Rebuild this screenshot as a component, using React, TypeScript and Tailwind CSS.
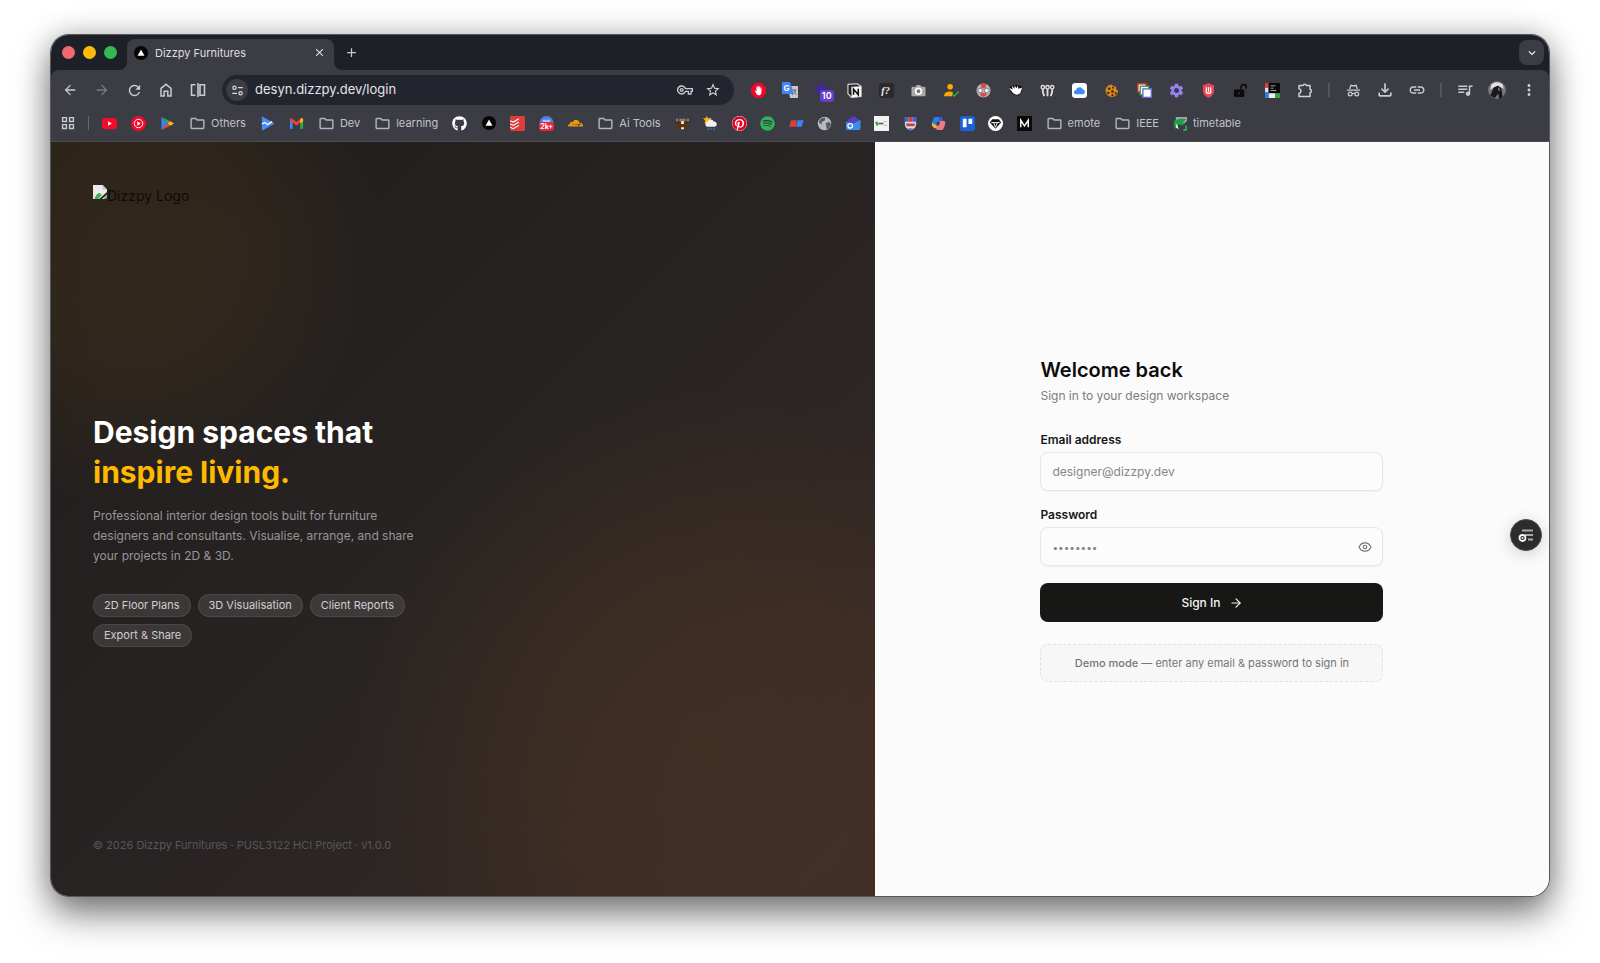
import type { ReactNode } from "react";
import {
  MdArrowBack,
  MdArrowForward,
  MdRefresh,
  MdStarOutline,
  MdOutlineVpnKey,
  MdOutlineFolder,
  MdOutlineExtension,
  MdQueueMusic,
  MdLink,
  MdMoreVert,
  MdExpandMore,
  MdClose,
  MdAdd,
  MdSettings,
  MdOutlineFileDownload,
} from "react-icons/md";
import { FaGithub, FaPinterest, FaSpotify, FaCloudflare } from "react-icons/fa6";
import { ArrowRight, Eye } from "lucide-react";

const svg = (children: ReactNode, cls = "size-[15px]", box = "0 0 16 16") => (
  <svg viewBox={box} className={cls} fill="none" aria-hidden="true">
    {children}
  </svg>
);

const HomeIcon = svg(
  <path d="M3 14V6.4L8 2.3l5 4.1V14H9.8V9.3H6.2V14Z" stroke="#c9cacd" strokeWidth="1.5" />,
  "size-4"
);
const SplitIcon = svg(
  <path d="M5.5 2.8H1.5v10.4h4M8 1v14M10 2.8h4.5v10.4H10Z" stroke="#c9cacd" strokeWidth="1.6" />,
  "size-4"
);
const TuneIcon = svg(
  <g stroke="#d7d8da" strokeWidth="1.5">
    <circle cx="4.2" cy="4.5" r="2" />
    <path d="M8.5 4.5h6M1.5 11.5h6" />
    <circle cx="11.8" cy="11.5" r="2" />
  </g>,
  "size-[13px]"
);
const AppsIcon = svg(
  <path
    d="M1.8 1.8h4.4v4.4H1.8ZM9.8 1.8h4.4v4.4H9.8ZM1.8 9.8h4.4v4.4H1.8ZM9.8 9.8h4.4v4.4H9.8Z"
    stroke="#c9cacd"
    strokeWidth="1.6"
  />,
  "size-[14px]"
);
const IncognitoIcon = svg(
  <g stroke="#c9cacd" strokeWidth="1.4">
    <path d="M4 6.5 5.2 2.5 8 3.2l2.8-.7L12 6.5" />
    <path d="M1 7.5h14M6.5 11.5q1.500-1 3 0" />
    <circle cx="4.5" cy="11.7" r="2" />
    <circle cx="11.5" cy="11.7" r="2" />
  </g>,
  "size-[15px]"
);

const Vercel = svg(
  <>
    <circle cx="8" cy="8" r="8" fill="#050505" />
    <path d="m8 4 4 7H4Z" fill="#fff" />
  </>,
  "size-[14px]"
);

type Item = { label: string; icon: ReactNode };

const extensions: Item[] = [
  {
    label: "AdBlock",
    icon: svg(
      <>
        <path d="M4.700 0h6.600L16 4.700v6.600L11.300 16H4.700L0 11.300V4.700Z" fill="#f2062b" />
        <path
          d="M4.300 8.500 5.200 8l.6 1V4.200q.5-.7 1 0V7l.3-3.800q.6-.7 1 0L8.400 7l.4-3.200q.6-.6 1 0V7.500l.4-2.500q.6-.5 1 0v5q-.4 3-3 3-2 0-2.700-1.800Z"
          fill="#fff"
        />
      </>
    ),
  },
  {
    label: "Google Translate",
    icon: svg(
      <>
        <path d="M6 4h10v12H8Z" fill="#c8c8c8" />
        <path d="M9.500 8h5M12 7v1q1 3 2.500 5M14 8q-1 3-4 5" stroke="#777" />
        <path d="M0 0h8l4 12H0Z" fill="#4285f4" />
        <text x="1.500" y="9" fontSize="8" fontWeight="700" fill="#fff" fontFamily="Inter, sans-serif">
          G
        </text>
      </>,
      "size-4"
    ),
  },
  {
    label: "Wallet notifications",
    icon: (
      <span className="relative block">
        {svg(<path d="M6 0 14 4v7l-7 3-7-5V4Z" fill="#3f2a8f" />)}
        <span className="absolute top-[7px] left-[5px] rounded-[3px] bg-[#6a3fc8] px-[2px] text-[9px] leading-3 font-semibold text-white">
          10
        </span>
      </span>
    ),
  },
  {
    label: "Notion",
    icon: svg(
      <>
        <path d="m1 1.500 10-.7L15 3.500V14.500L5 15.300 1 11.500Z" fill="#222" stroke="#ddd" strokeWidth="1.200" />
        <path d="M4.500 4 15 3.500V14.500L5 15.300Z" fill="#f5f5f5" />
        <path d="M7 12.500v-6l5 6v-6.500" stroke="#111" strokeWidth="1.700" />
      </>
    ),
  },
  {
    label: "WhatFont",
    icon: svg(
      <>
        <rect width="16" height="16" rx="3" fill="#2a2a2c" />
        <text x="2.500" y="12" fontSize="11" fontStyle="italic" fontWeight="700" fill="#eee" fontFamily="Liberation Serif, serif">
          f?
        </text>
      </>
    ),
  },
  {
    label: "Screenshot",
    icon: svg(
      <>
        <path d="M2 4h3l1-2h4l1 2h3q1.500 0 1.500 1.500V13q0 1-1.500 1H2q-1.500 0-1.500-1V5.500Q.5 4 2 4" fill="#aaa" />
        <circle cx="8" cy="8.700" r="3" fill="#777" stroke="#fff" strokeWidth="1.800" />
      </>
    ),
  },
  {
    label: "Account check",
    icon: svg(
      <>
        <circle cx="6.500" cy="4" r="3" fill="#f9ab00" />
        <path d="M0 14q0-5 6.500-5 3 0 3 2l-1 3Z" fill="#f9ab00" />
        <path d="m9 12 2 2 4.500-5" stroke="#34a853" strokeWidth="1.500" />
      </>
    ),
  },
  {
    label: "Reader",
    icon: svg(
      <>
        <circle cx="8" cy="8" r="7.500" fill="#b9b4b4" />
        <path d="M5 1.500q3-2 6 0l-1 4H6ZM4 12q4-3 8 0-4 6-8 0" fill="#e04848" />
        <g fill="#eee" stroke="#777" strokeWidth="1">
          <circle cx="4.500" cy="8" r="2.500" />
          <circle cx="11.500" cy="8" r="2.500" />
        </g>
      </>
    ),
  },
  {
    label: "Hand",
    icon: svg(
      <>
        <path d="M1 5q3-3 7-3l6 1q2 5-1 9-5 3-9-1Z" fill="#111" />
        <path d="m1 5 4 2-1-4 3 3V2.500l2 3L10.500 3 11 6l4-1-2 6q-3.500 3-7.500 0Z" fill="#fff" />
      </>
    ),
  },
  {
    label: "Tools",
    icon: svg(
      <g stroke="#dcdcdc" strokeWidth="1.500">
        <circle cx="3" cy="4.500" r="1.800" />
        <circle cx="8" cy="4.500" r="1.800" />
        <circle cx="13" cy="4.500" r="1.800" />
        <path d="M3 6.500v3L4.500 14M8 6.500V14M13 6.500v3L11.500 14" strokeWidth="2" />
      </g>
    ),
  },
  {
    label: "Cloud drive",
    icon: svg(
      <>
        <rect width="16" height="16" rx="3.500" fill="#fff" />
        <path d="M4.500 12a2.300 2.300 0 0 1-.3-4.600 4 4 0 0 1 7.500-.6A2.700 2.700 0 0 1 12 12Z" fill="#3b8df5" />
      </>
    ),
  },
  {
    label: "Cookie editor",
    icon: svg(
      <>
        <path d="M8 1.500a6.700 6.700 0 1 0 7 6.500l-2-1V4l-3-.5Z" fill="#d68a1c" />
        <g fill="#3b230c">
          <circle cx="5.500" cy="6" r="1.300" />
          <circle cx="4.500" cy="10.500" r="1.300" />
          <circle cx="9" cy="9" r="1.400" />
          <circle cx="9" cy="13" r="1.200" />
          <circle cx="12.500" cy="11" r="1.200" />
          <circle cx="9.500" cy="5" r="1" />
        </g>
      </>
    ),
  },
  {
    label: "Tab groups",
    icon: svg(
      <g fill="#fff" strokeWidth="1.500">
        <rect x="1" y="1" width="8.500" height="8.500" stroke="#e5392f" />
        <rect x="3.500" y="3.500" width="9" height="9" stroke="#2fa84f" />
        <rect x="6.300" y="6.300" width="9" height="9" stroke="#7268dc" />
      </g>
    ),
  },
  { label: "Settings gear", icon: <MdSettings className="size-[17px] text-[#9a7ff0]" /> },
  {
    label: "uBlock",
    icon: svg(
      <>
        <path d="M8 0q3 2 6 2v6q0 5-6 8-6-3-6-8V2q3 0 6-2" fill="#ef4453" />
        <path d="M5.700 4.500v5q0 1.500 2.300 1.500t2.300-1.500v-5M8 4.500v5" stroke="#fff" strokeWidth="1.300" />
      </>
    ),
  },
  {
    label: "Unlock",
    icon: svg(
      <>
        <rect x="1" y="7" width="11" height="8" rx="1.500" fill="#0b0b0c" />
        <path d="M8.500 7V4.500a2.800 2.800 0 0 1 5.600 0V6" stroke="#0b0b0c" strokeWidth="1.700" />
        <circle cx="6.500" cy="11" r="1" fill="#3b3c44" />
      </>
    ),
  },
  {
    label: "Design inspector",
    icon: svg(
      <>
        <path d="M4 0h12v11H4Z" fill="#080808" />
        <path d="M0 0h3.500v5H0Z" fill="#e33b2e" />
        <path d="M0 5h3.500v5H0Z" fill="#ddd" />
        <path d="M0 10h4v6H0Z" fill="#2d7ff0" />
        <path d="M4 11h7v5H4Z" fill="#eee" />
        <path d="M11 11h5v5h-5Z" fill="#2ba84a" />
        <path d="M6 3h5M6 5.500h3M6 8h6" stroke="#aaa" />
      </>
    ),
  },
  {
    label: "Extensions",
    icon: svg(
      <path
        d="M2 3.500h3.800a1.900 1.900 0 0 1 3.600 0H13v3.800a1.800 1.800 0 0 1 0 3.500V14.500H2v-3.200q2-.5 2-2.300T2 6.700Z"
        stroke="#d0d1d3"
        strokeWidth="1.500"
        strokeLinejoin="round"
      />,
      "size-4"
    ),
  },
];

const firstMarks: Item[] = [
  {
    label: "YouTube",
    icon: svg(
      <>
        <rect x="0" y="2" width="16" height="12" rx="3" fill="#f40b2c" />
        <path d="m6.500 5.500 4 2.500-4 2.500Z" fill="#fff" />
      </>
    ),
  },
  {
    label: "YouTube Music",
    icon: svg(
      <>
        <circle cx="8" cy="8" r="8" fill="#f40b2c" />
        <circle cx="8" cy="8" r="4.500" stroke="#fff" />
        <path d="m6.700 5.700 3.600 2.300-3.600 2.300Z" fill="#fff" />
      </>
    ),
  },
  {
    label: "Google Play",
    icon: svg(
      <>
        <path d="M1.500 1v14L8 8Z" fill="#3b82f6" />
        <path d="M1.500 1 8 8l3-2.500Z" fill="#34a853" />
        <path d="M1.500 15 8 8l3 2.500Z" fill="#ea4335" />
        <path d="m11 5.500 4 2.500-4 2.500L8 8Z" fill="#fbbc04" />
      </>
    ),
  },
];

const secondMarks: Item[] = [
  {
    label: "Play Console",
    icon: svg(
      <>
        <path d="M2 1q0-1 1.500 0L14.500 7.300q.8.700 0 1.400L3.500 15Q2 16 2 14.500Z" fill="#4a8cf5" />
        <path d="m2 8.500 3-1.500 3 2 5-3" stroke="#fff" strokeWidth="1.300" />
      </>
    ),
  },
  {
    label: "Gmail",
    icon: svg(
      <>
        <path d="M1 4v9.500h3V6Z" fill="#4285f4" />
        <path d="M15 4v9.500h-3V6Z" fill="#34a853" />
        <path d="M1 4.500V3l2-.7 5 4 5-4 2 .7v1.500l-7 5.500Z" fill="#ea4335" />
        <path d="m12 3 2-.8 1 1V6l-3 1.800Z" fill="#fbbc04" />
      </>
    ),
  },
];

const thirdMarks: Item[] = [
  { label: "GitHub", icon: <FaGithub className="size-[15px] text-white" /> },
  { label: "Vercel", icon: Vercel },
  {
    label: "Todoist",
    icon: svg(
      <>
        <rect width="16" height="16" rx="1.500" fill="#de3d3d" />
        <path d="m0 5 3.500 1.500L9.500 3M0 8.500 3.500 10l6-3.500M0 12l3.500 1.500 6-3.500" stroke="#fff" strokeWidth="1.200" />
      </>
    ),
  },
  {
    label: "Messages",
    icon: (
      <span className="relative block">
        {svg(
          <>
            <circle cx="8" cy="7.500" r="7.500" fill="#4d7fe8" />
            <path d="M4 4h8v3H4Z" fill="#a9c2f5" />
          </>
        )}
        <span className="absolute top-[6px] left-0 rounded-[3px] bg-[#e0283c] px-px text-[7px] leading-[9px] font-bold text-white">
          2k+
        </span>
      </span>
    ),
  },
  { label: "Cloudflare", icon: <FaCloudflare className="size-[15px] text-[#e8960c]" /> },
];

const longMarks: Item[] = [
  {
    label: "Chest",
    icon: svg(
      <>
        <path d="M1 3h14v4H1Z" fill="#8b7d6b" />
        <path d="M1 7h14v7H1Z" fill="#553516" />
        <path d="M0 6.500h16M4 3v4M12 3v4" stroke="#2d2015" />
        <path d="M6.500 5.500h3v3h-3ZM6.500 12h3v2h-3Z" fill="#eee" />
      </>
    ),
  },
  {
    label: "Weather",
    icon: svg(
      <>
        <path d="m0 2 3 .5L4 0l1.500 2.500L9 2 7.500 5l-6 3 .8-3Z" fill="#fbb40f" />
        <path d="M4.500 11.500a3 3 0 0 1 .5-5.800 3.500 3.500 0 0 1 6.500.3 2.800 2.800 0 0 1 1 5.500Z" fill="#eef0f3" />
        <path d="m6 13-1 2M9 13l-1 2M12 13l-1 2" stroke="#4287f5" />
      </>
    ),
  },
  { label: "Pinterest", icon: <FaPinterest className="size-[15px] rounded-full bg-white text-[#e60023]" /> },
  {
    label: "Spotify",
    icon: <FaSpotify className="size-[15px] text-[#2fb457]" />,
  },
  {
    label: "Red and blue",
    icon: svg(
      <>
        <path d="M2.500 4.500H8V11.500H0Z" fill="#de3f36" />
        <path d="M9 4.500h6.500l-2 7H8Z" fill="#3b86ef" />
      </>
    ),
  },
  {
    label: "Globe",
    icon: svg(
      <>
        <circle cx="8" cy="8" r="7.200" fill="#b9babd" />
        <path d="M3 4q3-3 6-2L8 5 5 6v3L2 7ZM9 8l4-2 2 3-3 5-2-1V10Z" fill="#55575e" />
      </>
    ),
  },
  {
    label: "Mail",
    icon: svg(
      <>
        <path d="m8 0 6 4v4H2V4Z" fill="#573cc4" />
        <path d="m0 6 8 2 7.500-4v9q0 2-2 2H2q-2 0-2-2Z" fill="#3f8bea" />
        <circle cx="4.500" cy="10.500" r="2.500" stroke="#fff" strokeWidth="1.300" />
      </>
    ),
  },
  {
    label: "Document",
    icon: svg(
      <>
        <path d="M0 0h16v16H0Z" fill="#f2f2f2" />
        <path d="M1 6h3l1 3-2 2Z" fill="#35a04d" />
        <path d="M5 8h5" stroke="#456" strokeWidth="1.500" />
        <path d="M10 6h4M10 10h4" stroke="#bbb" />
      </>
    ),
  },
  {
    label: "University",
    icon: svg(
      <>
        <path d="M2 1h12v8q0 4-6 6.500Q2 13 2 9Z" fill="#d9dbe5" />
        <path d="M2 1h4v5H2ZM10 1h4v5h-4Z" fill="#3b67c8" />
        <path d="M6 1h4v5H6ZM3 8h10l-1 3H4Z" fill="#d33b45" />
        <path d="m5 13 6 .2L8 15.500Z" fill="#3b67c8" />
      </>
    ),
  },
  {
    label: "Copilot",
    icon: svg(
      <>
        <path d="M5 1h5q2 0 1.500 3L9 10H3q-3 0-2-3l1.500-4Q3 1 5 1" fill="#2b7de0" />
        <path d="M1 7q2 3 6 2l-1 4q-4 0-5-3Z" fill="#f2b23a" />
        <path d="M9 5h4q3 0 2 4l-1.500 4Q13 15 11 15H7q-2 0-1-3Z" fill="#ee7a80" />
        <path d="m8 1 4 0 1 4H9Z" fill="#2a5fd8" />
        <path d="M6.500 6h3L8.500 10H5.500Z" fill="#3b3c44" />
      </>
    ),
  },
  {
    label: "Trello",
    icon: svg(
      <>
        <rect width="16" height="16" rx="2.500" fill="#1a62d6" />
        <path d="M3 3h4v9H3ZM9 3h4v5.500H9Z" fill="#fff" />
      </>
    ),
  },
  {
    label: "Gem",
    icon: svg(
      <>
        <circle cx="8" cy="8" r="8" fill="#fff" />
        <path d="M4.500 3.500h7L14 7l-6 6.500L2 7Z" fill="#111" />
        <path d="M3.500 7h9M6 7l2 5 2-5" stroke="#fff" />
      </>
    ),
  },
  {
    label: "Medium",
    icon: svg(
      <>
        <path d="M0 0h16v16H0Z" fill="#0a0a0a" />
        <path d="M4 12V4.500l4 6 4-6V12" stroke="#f2f2f2" strokeWidth="1.600" />
      </>
    ),
  },
];

const TimetableIcon = svg(
  <>
    <path d="M3 1h12v4l-3 3H3Z" fill="#a3a8a4" />
    <path d="M1 5 7 3l8 0-4 3v4L6 9l-3 5-2-4Z" fill="#1fa04a" />
    <path d="M4 8 6 14 3 12Z" fill="#fff" />
    <path d="M11 15h3v-5" stroke="#2dbb58" strokeWidth="1.500" />
  </>
);

function Mark({ label, icon }: Item) {
  return (
    <a href="#" aria-label={label} className="flex w-[15px] shrink-0 items-center justify-center">
      {icon}
    </a>
  );
}

function Folder({ children, icon }: { children: ReactNode; icon?: ReactNode }) {
  return (
    <a href="#" className="flex shrink-0 items-center gap-[5px] text-[11px] text-[#c3c4c7]">
      {icon ?? <MdOutlineFolder className="size-[17px] text-[#b5b6ba]" />}
      {children}
    </a>
  );
}

function ToolButton({ label, children }: { label: string; children: ReactNode }) {
  return (
    <button aria-label={label} className="flex size-4 shrink-0 items-center justify-center text-[#c9cacd]">
      {children}
    </button>
  );
}

function TabStrip() {
  return (
    <div className="flex h-[35px] shrink-0 items-center bg-[#1d2027] pr-[5px] pl-[11px]">
      <div className="flex gap-2">
        <span className="size-[13px] rounded-full bg-[#ee6a70]" />
        <span className="size-[13px] rounded-full bg-[#febc09]" />
        <span className="size-[13px] rounded-full bg-[#35b955]" />
      </div>
      <div className="relative ml-[10px] flex h-[31px] w-[207px] items-center self-end rounded-t-lg bg-[#3b3c44] pr-2 pb-1 pl-[7px]">
        <svg viewBox="0 0 8 8" className="absolute bottom-0 -left-2 size-2" aria-hidden="true">
          <path d="M8 0v8H0a8 8 0 0 0 8-8" fill="#3b3c44" />
        </svg>
        <svg viewBox="0 0 8 8" className="absolute -right-2 bottom-0 size-2" aria-hidden="true">
          <path d="M0 0v8h8a8 8 0 0 1-8-8" fill="#3b3c44" />
        </svg>
        {Vercel}
        <span className="ml-[7px] flex-1 text-[11px] leading-4 text-[#dedfe1]">Dizzpy Furnitures</span>
        <button aria-label="Close tab">
          <MdClose className="size-[13px] text-[#dedfe1]" />
        </button>
      </div>
      <button aria-label="New tab" className="ml-[10px]">
        <MdAdd className="size-[15px] text-[#c9cacd]" />
      </button>
      <button
        aria-label="Search tabs"
        className="ml-auto flex size-[25px] items-center justify-center rounded-lg bg-[#3b3c44]"
      >
        <MdExpandMore className="size-[14px] text-white" />
      </button>
    </div>
  );
}

function Toolbar() {
  return (
    <div className="bg-[#1d2027]">
      <div className="rounded-t-lg border-b border-[#4b4a4e] bg-[#3b3c44]">
        <div className="flex items-center gap-4 pt-[5px] pr-3 pl-[11px]">
          <ToolButton label="Back">
            <MdArrowBack className="size-4 shrink-0" />
          </ToolButton>
          <ToolButton label="Forward">
            <MdArrowForward className="size-4 shrink-0 text-[#7b7c82]" />
          </ToolButton>
          <ToolButton label="Reload">
            <MdRefresh className="size-[17px] shrink-0" />
          </ToolButton>
          <ToolButton label="Home">{HomeIcon}</ToolButton>
          <ToolButton label="Split view">{SplitIcon}</ToolButton>
          <div className="flex h-[30px] min-w-0 flex-1 items-center rounded-full bg-[#23252e] pr-[13px] pl-1">
            <button
              aria-label="Site information"
              className="flex size-[22px] shrink-0 items-center justify-center rounded-full bg-[#3b3c44]"
            >
              {TuneIcon}
            </button>
            <input
              aria-label="Address"
              defaultValue="desyn.dizzpy.dev/login"
              className="ml-[7px] min-w-0 flex-1 bg-transparent text-[13px] text-[#e3e4e6] outline-none"
            />
            <button aria-label="Passwords">
              <MdOutlineVpnKey className="size-4 text-[#c9cacd]" />
            </button>
            <button aria-label="Bookmark this page" className="ml-3">
              <MdStarOutline className="size-4 text-[#d7d8da]" />
            </button>
          </div>
          <div className="flex w-[563px] shrink-0 items-center justify-between">
            {extensions.map((e) => (
              <ToolButton key={e.label} label={e.label}>
                <span className="shrink-0">{e.icon}</span>
              </ToolButton>
            ))}
          </div>
          <span className="-mx-px h-[14px] w-[2px] bg-[#55565d]" />
          <ToolButton label="Incognito">{IncognitoIcon}</ToolButton>
          <ToolButton label="Downloads">
            <MdOutlineFileDownload className="size-5 shrink-0" />
          </ToolButton>
          <ToolButton label="Copy link">
            <MdLink className="size-[18px] shrink-0" />
          </ToolButton>
          <span className="-mx-px h-[14px] w-[2px] bg-[#55565d]" />
          <ToolButton label="Media">
            <MdQueueMusic className="size-[18px] shrink-0" />
          </ToolButton>
          <ToolButton label="Profile">
            {svg(
              <>
                <circle cx="8" cy="8" r="8" fill="#74767a" />
                <path d="M3 3q5-4 10 0l1 4-3-2H6L2 8Z" fill="#e4e4e6" />
                <path d="m5 6 4-2 3 3 1 7-3 2-1-5-3 4-4-2Z" fill="#17181b" />
                <path d="M9 5.500 10.500 7v2L9 8Z" fill="#a0816c" />
              </>,
              "size-[18px] shrink-0"
            )}
          </ToolButton>
          <ToolButton label="Menu">
            <MdMoreVert className="size-[18px] shrink-0" />
          </ToolButton>
        </div>
        <nav aria-label="Bookmarks" className="flex h-9 items-center gap-[14px] pl-[10px]">
          <button aria-label="All apps" className="shrink-0">
            {AppsIcon}
          </button>
          <span className="-mx-px h-[14px] w-px bg-[#66676d]" />
          {firstMarks.map((m) => (
            <Mark key={m.label} {...m} />
          ))}
          <Folder>Others</Folder>
          {secondMarks.map((m) => (
            <Mark key={m.label} {...m} />
          ))}
          <Folder>Dev</Folder>
          <Folder>learning</Folder>
          {thirdMarks.map((m) => (
            <Mark key={m.label} {...m} />
          ))}
          <Folder>Ai Tools</Folder>
          <div className="flex w-[357px] shrink-0 items-center justify-between">
            {longMarks.map((m) => (
              <Mark key={m.label} {...m} />
            ))}
          </div>
          <Folder>emote</Folder>
          <Folder>IEEE</Folder>
          <Folder icon={TimetableIcon}>timetable</Folder>
        </nav>
      </div>
    </div>
  );
}

const features = ["2D Floor Plans", "3D Visualisation", "Client Reports", "Export & Share"];

function BrandPanel() {
  return (
    <section className="flex w-[55%] flex-col justify-between bg-[radial-gradient(circle_at_70px_100px,#e0850f16_0,#e0850f12_120px,transparent_260px),radial-gradient(circle_at_80%_80%,#e87a1417_0,#e87a1412_170px,transparent_360px),linear-gradient(135deg,#1f1c1b_0%,#262322_45%,#372a28_100%)] px-[42px] py-[43px]">
      <div className="flex h-9 items-start">
        <svg viewBox="0 0 16 16" className="size-[14px]" aria-hidden="true">
          <path d="M0 0h11l5 5v11H0Z" fill="#e9e9ee" />
          <path d="M11 0v5h5Z" fill="#c3c5cc" />
          <path d="M2 15q4-9 8-4l-4 5H2Z" fill="#3fb04f" />
          <path d="m16 8-9 8h3l6-5Z" fill="#2a2119" />
          <path d="m16 12-4 4h4Z" fill="#3fb04f" />
        </svg>
        <span className="text-[14px] leading-[22px] text-[#0e0c0b]">Dizzpy Logo</span>
      </div>
      <div className="max-w-[343px]">
        <h1 className="text-[30px] leading-10 font-bold text-white">
          Design spaces that
          <br />
          <span className="text-[#ffb900]">inspire living.</span>
        </h1>
        <p className="mt-[14px] text-[12px] leading-5 text-[#96959a]">
          Professional interior design tools built for furniture designers and consultants. Visualise, arrange, and share
          your projects in 2D &amp; 3D.
        </p>
        <ul className="mt-7 flex flex-wrap gap-[7px]">
          {features.map((f) => (
            <li
              key={f}
              className="flex h-[23px] items-center rounded-full border border-white/8 bg-white/10 px-[10px] text-[11px] text-[#cfcfd1]"
            >
              {f}
            </li>
          ))}
        </ul>
      </div>
      <p className="text-[11px] leading-4 text-[#57565a]">© 2026 Dizzpy Furnitures · PUSL3122 HCI Project · v1.0.0</p>
    </section>
  );
}

const labelClass = "block text-[12px] leading-6 font-semibold text-[#161616]";
const fieldClass =
  "h-[39px] w-full rounded-lg border border-[#e6e6e6] bg-[#fcfcfc] px-[11px] text-[12px] text-[#222] shadow-xs outline-none placeholder:text-[#85858a]";

function LoginPanel() {
  return (
    <section className="relative flex flex-1 items-center justify-center bg-[#fbfbfb]">
      <form className="w-[343px]" onSubmit={(e) => e.preventDefault()}>
        <h2 className="text-[20px] leading-7 font-semibold text-[#0c0c0c]">Welcome back</h2>
        <p className="text-[12px] leading-6 text-[#7d7c80]">Sign in to your design workspace</p>
        <div className="mt-5">
          <label htmlFor="email" className={labelClass}>
            Email address
          </label>
          <input id="email" type="email" placeholder="designer@dizzpy.dev" className={fieldClass} />
        </div>
        <div className="mt-3">
          <label htmlFor="password" className={labelClass}>
            Password
          </label>
          <div className="relative">
            <input
              id="password"
              type="password"
              placeholder="••••••••"
              className={`${fieldClass} placeholder:text-[10px]`}
            />
            <button type="button" aria-label="Show password" className="absolute inset-y-0 right-[11px]">
              <Eye className="size-[14px] text-[#77777b]" />
            </button>
          </div>
        </div>
        <button
          type="submit"
          className="mt-[17px] flex h-[39px] w-full items-center justify-center gap-2 rounded-lg bg-[#171715] text-[12px] font-medium text-[#f3f3f3]"
        >
          Sign In
          <ArrowRight className="size-[14px]" />
        </button>
        <p className="mt-[22px] flex h-[38px] items-center justify-center rounded-lg border border-dashed border-[#e2e2e2] bg-[#f7f7f7] text-[11px] text-[#757579]">
          <span>
            <span className="font-medium">Demo mode</span> — enter any email &amp; password to sign in
          </span>
        </p>
      </form>
      <button
        aria-label="Open side panel"
        className="absolute top-[377px] right-[7px] flex size-8 items-center justify-center rounded-full border border-[#4a4a4c] bg-[#2c2c2e] shadow-[0_3px_16px_rgb(0_0_0/0.18)]"
      >
        {svg(
          <>
            <path d="M4 3.500h11M7 8h8M10 12.500h5" stroke="#aaa" strokeWidth="1.800" />
            <circle cx="4.500" cy="11" r="3" fill="#222" stroke="#fff" strokeWidth="1.800" />
            <circle cx="4.500" cy="11" r="1" fill="#fff" />
          </>,
          "size-4"
        )}
      </button>
    </section>
  );
}

export default function App() {
  return (
    <div className="flex min-h-screen bg-white px-[51px] pt-[35px] pb-[67px] font-['Inter',sans-serif]">
      <div className="flex flex-1 flex-col overflow-hidden rounded-[18px] shadow-[0_0_0_1px_#55585c,0_18px_36px_rgb(0_0_0/0.5),0_0_30px_rgb(0_0_0/0.22)]">
        <TabStrip />
        <Toolbar />
        <main className="flex flex-1">
          <BrandPanel />
          <LoginPanel />
        </main>
      </div>
    </div>
  );
}
